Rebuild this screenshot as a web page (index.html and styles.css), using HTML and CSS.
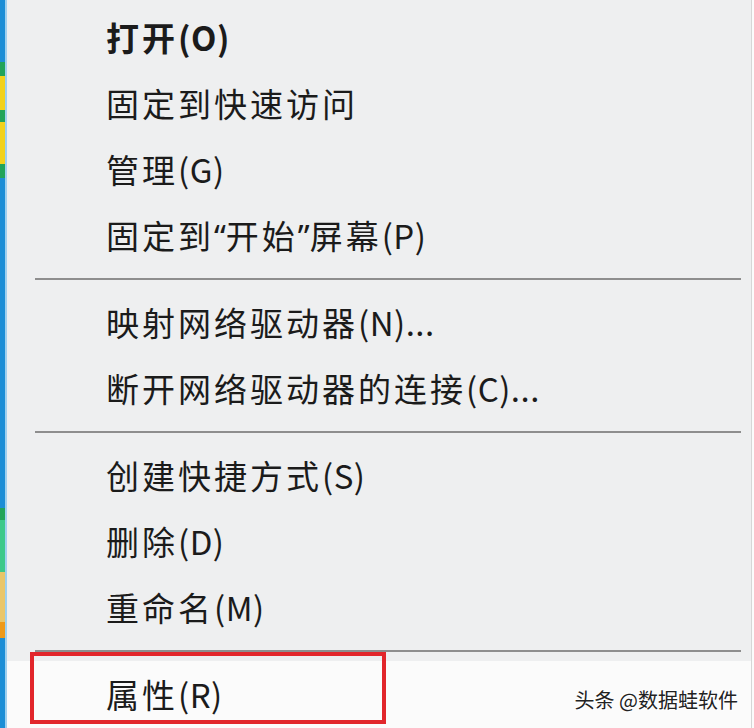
FILE: index.html
```html
<!DOCTYPE html>
<html lang="zh-CN">
<head>
    <meta charset="UTF-8">
    <meta name="viewport" content="width=device-width, initial-scale=1.0">
    <title>右键菜单</title>
    <link rel="stylesheet" href="styles.css">
</head>
<body>
    <div class="screen">
        <div class="desktop-strip">
            <span class="blk blue" style="height:62px"></span>
            <span class="blk green" style="height:14px"></span>
            <span class="blk yellow" style="height:34px"></span>
            <span class="blk green" style="height:12px"></span>
            <span class="blk yellow" style="height:42px"></span>
            <span class="blk green" style="height:14px"></span>
            <span class="blk blue" style="height:330px"></span>
            <span class="blk green" style="height:12px"></span>
            <span class="blk teal" style="height:52px"></span>
            <span class="blk tan" style="height:50px"></span>
            <span class="blk orange" style="height:16px"></span>
            <span class="blk blue" style="height:90px"></span>
        </div>

        <div class="menu">
            <div class="item bold">打开<span class="en">(O)</span></div>
            <div class="item">固定到快速访问</div>
            <div class="item">管理<span class="en">(G)</span></div>
            <div class="item">固定到<span class="q">“</span>开始<span class="q">”</span>屏幕<span class="en">(P)</span></div>
            <div class="sep"></div>
            <div class="item">映射网络驱动器<span class="en">(N)...</span></div>
            <div class="item">断开网络驱动器的连接<span class="en">(C)...</span></div>
            <div class="sep"></div>
            <div class="item">创建快捷方式<span class="en">(S)</span></div>
            <div class="item">删除<span class="en">(D)</span></div>
            <div class="item">重命名<span class="en">(M)</span></div>
            <div class="sep"></div>
            <div class="item last">属性<span class="en">(R)</span></div>
        </div>

        <div class="highlight"></div>
        <div class="watermark">头条 @数据蛙软件</div>
    </div>
</body>
</html>
```

FILE: styles.css
```css
body {
    margin: 0;
    padding: 0;
    background: #fbfbfb;
    font-family: "Noto Sans CJK SC", "Noto Sans", sans-serif;
    color: #1b1b1b;
}
.screen {
    position: relative;
    display: flex;
    width: 754px;
    height: 728px;
    overflow: hidden;
}
.desktop-strip {
    width: 5px;
    display: flex;
    flex-direction: column;
    border-right: 2px solid #9fd0ef;
    flex-shrink: 0;
}
.blk {
    display: block;
    flex-shrink: 0;
}
.blue { background: #1c8ed6; }
.green { background: #21a45a; }
.yellow { background: #f2d21c; }
.teal { background: #3cc98a; }
.tan { background: #e9c66a; }
.orange { background: #ee9a1a; }

.menu {
    width: 744px;
    padding-top: 4px;
    background: #eeeff0;
    border-right: 1px solid #d6d6d6;
    display: flex;
    flex-direction: column;
}
.item {
    height: 66px;
    line-height: 66px;
    padding-left: 99px;
    font-size: 33px;
    letter-spacing: 3px;
    white-space: nowrap;
}
.item .en {
    letter-spacing: 0.5px;
}
.item .q {
    font-family: "Noto Sans", sans-serif;
    letter-spacing: 0;
}
.item.bold {
    font-weight: bold;
}
.item.last {
    background: #fbfbfb;
    flex: 1;
}
.sep {
    height: 21px;
    display: flex;
    align-items: center;
    padding: 0 10px 0 28px;
}
.sep::before {
    content: "";
    flex: 1;
    height: 2px;
    background: #8e8e8e;
}
.highlight {
    position: absolute;
    left: 30px;
    top: 652px;
    width: 348px;
    height: 64px;
    border: 4px solid #e2262b;
}
.watermark {
    position: absolute;
    right: 16px;
    bottom: 14px;
    font-size: 20px;
    color: #222;
    text-shadow: 1px 1px 0 #fff, -1px -1px 0 #fff;
}
```
